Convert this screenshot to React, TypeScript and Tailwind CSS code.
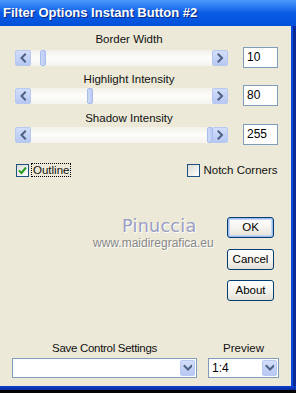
import React from "react";

const font = { fontFamily: '"Liberation Sans", Arial, sans-serif' };

function Chevron({ dir }: { dir: "left" | "right" | "down" }) {
  const d =
    dir === "left"
      ? "M6 1.5 L2.5 5 L6 8.5"
      : dir === "right"
      ? "M2.5 1.5 L6 5 L2.5 8.5"
      : "M1.5 3 L5 6.5 L8.5 3";
  return (
    <svg width="9" height="10" viewBox="0 0 9 10">
      <path d={d} fill="none" stroke="#4d6185" strokeWidth="2" strokeLinecap="square" />
    </svg>
  );
}

function ArrowBtn({ dir }: { dir: "left" | "right" }) {
  return (
    <div className="w-[16px] h-[16px] flex items-center justify-center rounded-[2px] border border-[#b7c9f3] bg-gradient-to-b from-[#d3def9] to-[#b6c8f3]">
      <Chevron dir={dir} />
    </div>
  );
}

function SliderRow({ label, value, thumb, labelMt, rowMt }: { label: string; value: string; thumb: number; labelMt: string; rowMt: string }) {
  return (
    <>
      <div className={`${labelMt} ml-[15px] w-[228px] text-center text-[11.5px] leading-[12px] text-[#111]`}>{label}</div>
      <div className={`${rowMt} flex items-center ml-[15px]`}>
        <div className="w-[213px] h-[16px] flex">
          <ArrowBtn dir="left" />
          <div className="relative flex-1 h-[16px] bg-gradient-to-b from-[#f3f1ea] via-[#fdfdfb] to-[#f4f3ee]">
            <div
              className="absolute top-0 h-[16px] w-[6px] rounded-[2px] border border-[#a9bdec] bg-gradient-to-r from-[#cddaf8] to-[#b9cbf5]"
              style={{ left: thumb }}
            />
          </div>
          <ArrowBtn dir="right" />
        </div>
        <div className="ml-[15px] w-[35px] h-[21px] bg-white border border-[#7f9db9] pl-[3px] text-[12px] leading-[19px] text-black">{value}</div>
      </div>
    </>
  );
}

function XPButton({ children, def, mt }: { children: React.ReactNode; def?: boolean; mt: string }) {
  return (
    <div
      className={`${mt} w-[47px] h-[21px] rounded-[3px] border border-[#003c74] flex items-center justify-center text-[11.5px] text-black bg-gradient-to-b from-[#ffffff] via-[#f5f4ef] to-[#e3e1d6] ${def ? "shadow-[inset_0_0_0_1px_#9fbbee,inset_0_0_0_2px_#c6d6f6]" : ""}`}
    >
      {children}
    </div>
  );
}

function Combo({ w, text }: { w: string; text?: string }) {
  return (
    <div className={`${w} h-[20px] bg-white border border-[#7f9db9] flex items-center p-[1px]`}>
      <div className="flex-1 pl-[2px] text-[12px] leading-[16px] text-black">{text}</div>
      <div className="w-[15px] h-[16px] rounded-[2px] border border-[#b7c9f3] bg-gradient-to-b from-[#d3def9] to-[#b6c8f3] flex items-center justify-center">
        <Chevron dir="down" />
      </div>
    </div>
  );
}

export default function App() {
  return (
    <div className="w-[296px] h-[393px] bg-[#050505] overflow-hidden" style={font}>
      {/* title bar */}
      <div className="h-[26px] w-[296px] flex items-center pl-[3px] bg-gradient-to-b from-[#4a98fb] via-[#0a5be6] to-[#0250d8]">
        <span className="text-white font-bold text-[13px] leading-[16px] mt-[-1px] [text-shadow:1px_1px_0_#0a2a80]">
          Filter Options Instant Button #2
        </span>
      </div>
      <div className="flex">
        {/* body */}
        <div className="w-[291px] h-[360px] bg-[#ece9d8] flex flex-col">
          <SliderRow label="Border Width" value="10" thumb={9} labelMt="mt-[7px]" rowMt="mt-[2px]" />
          <SliderRow label="Highlight Intensity" value="80" thumb={56} labelMt="mt-[5px]" rowMt="mt-[0px]" />
          <SliderRow label="Shadow Intensity" value="255" thumb={176} labelMt="mt-[6px]" rowMt="mt-[0px]" />

          {/* checkboxes */}
          <div className="mt-[18px] h-[14px] flex items-center text-[11.5px] text-[#111]">
            <div className="ml-[16px] w-[13px] h-[13px] border border-[#1c5180] bg-gradient-to-br from-[#dcdcd5] to-white flex items-center justify-center">
              <svg width="9" height="9" viewBox="0 0 9 9">
                <path d="M1 4.5 L3.5 7 L8 1.5" fill="none" stroke="#21a121" strokeWidth="2" />
              </svg>
            </div>
            <div className="ml-[2px] px-[1px] h-[14px] leading-[12px] border border-dotted border-black">Outline</div>
            <div className="ml-[116px] w-[13px] h-[13px] border border-[#1c5180] bg-gradient-to-br from-[#dcdcd5] to-white" />
            <div className="ml-[3px] leading-[12px]">Notch Corners</div>
          </div>

          {/* watermark + buttons */}
          <div className="mt-[40px] flex">
            <div className="flex-1 flex flex-col">
              <div
                className="ml-[122px] mt-[-1px] text-[17.5px] leading-[20px] text-[#9a9dc4] tracking-[0.3px] [text-shadow:1px_1px_0_#ffffff]"
                style={{ fontFamily: '"DejaVu Sans", Verdana, sans-serif' }}
              >
                Pinuccia
              </div>
              <div className="ml-[93px] mt-[1px] text-[12px] leading-[12px] text-[#888888] [text-shadow:1px_1px_0_#ffffff]">
                www.maidiregrafica.eu
              </div>
            </div>
            <div className="mr-[17px] flex flex-col">
              <XPButton def mt="mt-0">OK</XPButton>
              <XPButton mt="mt-[11px]">Cancel</XPButton>
              <XPButton mt="mt-[10px]">About</XPButton>
            </div>
          </div>

          {/* bottom */}
          <div className="mt-[41px] flex">
            <div className="ml-[12px] w-[185px] flex flex-col">
              <div className="text-center text-[11.5px] leading-[12px] tracking-[-0.3px] text-[#111]">Save Control Settings</div>
              <div className="mt-[4px]">
                <Combo w="w-[185px]" />
              </div>
            </div>
            <div className="ml-[11px] w-[71px] flex flex-col">
              <div className="text-center text-[11.5px] leading-[12px] text-[#111]">Preview</div>
              <div className="mt-[4px]">
                <Combo w="w-[71px]" text="1:4" />
              </div>
            </div>
          </div>
        </div>
        {/* right frame */}
        <div className="w-[5px] h-[360px] flex">
          <div className="w-[2px] bg-[#0b48dc]" />
          <div className="w-[3px] bg-[#0a2a9a]" />
        </div>
      </div>
      {/* bottom frame */}
      <div className="h-[4px] w-[296px] bg-gradient-to-b from-[#0a3fd2] to-[#0a2a9a]" />
    </div>
  );
}
